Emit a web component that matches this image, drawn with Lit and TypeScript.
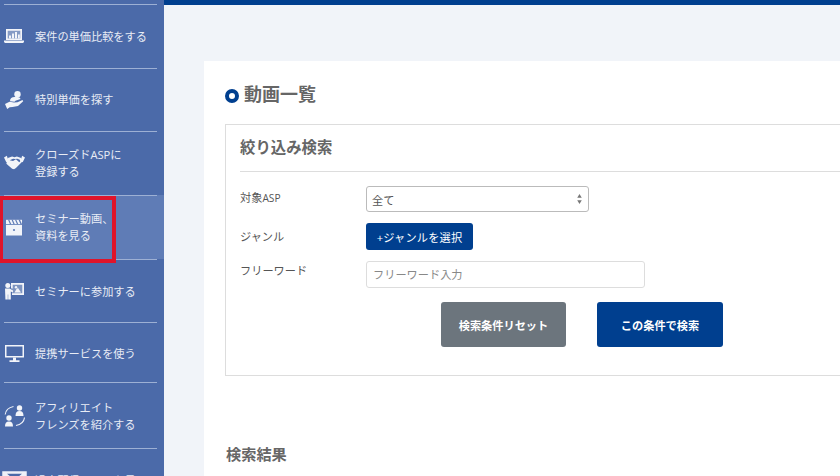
import { LitElement, html, css, svg } from "lit";
import { customElement } from "lit/decorators.js";

const icons: Record<string, unknown> = {
  laptop: svg`<path d="M2 0h16v11H2z" fill-opacity=".35"/><path fill-rule="evenodd" d="M2 0h16v11H2z M3.700 1.700v7.800h12.600V1.700z"/><path d="M5 9.500V6.500h2v3zM8 9.500V4.500h2v5zM11 9.500V3h2v6.500zM14 9.500V5.500h1.800v4z"/><path d="M0 11.500h20V13l-1 1H1l-1-1z"/>`,
  hand: svg`<circle cx="12.500" cy="3.300" r="3.200"/><path d="M5 10.200C5 7.300 6.800 6 9.500 6h3c1.700 0 2.700.8 3 2l-5 1.800-1 1z"/><path d="M0 13l4.500-2.300 4.500.7 3.500-.2 5-2.200 .7 1.300-5.200 4.700-5.500 1-2.800.3-2.500 1.700z"/>`,
  shake: svg`<path d="M0 2.500L3 .8l1.800 5.400-2.400 1.500zM22 2.500L19 .8l-1.800 5.400 2.400 1.500z"/><path d="M4 3.200L8.500 1.500l2.500.8 2.500-.8 4.500 1.700 1 4-6.500 6.300-2 1.500-2-.5-6-5.300z"/><path d="M6 5.600l3.500-1.800 2 .5 2.500-.5 2.500 1.200.5 1.500-1 1-3.500-3-3 1.800z" fill="#4b6aa9"/>`,
  clap: svg`<path d="M0 6h16v10.500H0z"/><path d="M0 .800h16v4.400H0z"/><path d="M2 .800l2 4.400h1.300l-2-4.400zM5.500 .800l2 4.400h1.300l-2-4.400zM9 .800l2 4.400h1.300l-2-4.400zM12.500 .800l2 4.400H16l-2-4.400z" fill="#5f7cb6"/><circle cx="8" cy="11" r="1.100" fill="#5f7cb6"/>`,
  present: svg`<circle cx="2.800" cy="2.600" r="2.500"/><path d="M0 5.600h4.800l3.200 2v1.800L5.800 8.500V16.500H3.200v-5h-.4v5H.4z"/><path d="M7 1h11v10H7z" fill-opacity=".3"/><path fill-rule="evenodd" d="M6 0h13v12H7v-1.700h10.300V1.700H7.700V5.500H6z"/><path d="M9.500 9.500l2-3.500 1.500-1 3 4.500z"/><circle cx="11" cy="4.300" r="1.200"/>`,
  monitor: svg`<path fill-rule="evenodd" d="M0 0h19v12.500H0z M1.500 1.500v9.500h16V1.500z"/><path d="M8 12.500h3v2.800h3.500V17h-10v-1.700H8z"/>`,
  friends: svg`<circle cx="15.500" cy="3" r="2.700"/><path d="M11.500 11c0-3.500 1.200-5 4-5s4 1.500 4 5z"/><circle cx="5" cy="13" r="2.700"/><path d="M1 21.500c0-3.500 1.200-5 4-5s4 1.500 4 5z"/><path d="M1.200 9.500C1.700 5 4.500 2.500 9.500 1.500" fill="none" stroke="#eef1f8" stroke-width="1.100"/><path d="M20.500 12.500c-.5 4-3.500 7-8.500 8" fill="none" stroke="#eef1f8" stroke-width="1.100"/>`,
  mail: svg`<path d="M1.500 1.500h22v16h-22z M1.500 1.500l11 9 11-9" fill="none" stroke="#eef1f8" stroke-width="2.500"/>`,
};

const nav = [
  { h: 64, pt: 0, icon: "laptop", vb: "0 0 20 14", iw: 20, lines: ["案件の単価比較をする"] },
  { h: 63, pt: 0, icon: "hand", vb: "0 0 19 18", iw: 19, lines: ["特別単価を探す"] },
  { h: 64, pt: 0, icon: "shake", vb: "0 0 22 16", iw: 21, lines: ["クローズドASPに", "登録する"] },
  { h: 64, pt: 0, icon: "clap", vb: "0 0 16 17", iw: 16, lines: ["セミナー動画、", "資料を見る"], active: true },
  { h: 63, pt: 1, icon: "present", vb: "0 0 19 17", iw: 19, lines: ["セミナーに参加する"] },
  { h: 60, pt: 2, icon: "monitor", vb: "0 0 19 17", iw: 19, lines: ["提携サービスを使う"] },
  { h: 66, pt: 1, icon: "friends", vb: "0 0 21 22", iw: 21, lines: ["アフィリエイト", "フレンズを紹介する"] },
  { h: 64, pt: 0, icon: "mail", vb: "0 0 25 19", iw: 25, lines: ["過去配信メールを見る"] },
];

@customElement("app-root")
export class AppRoot extends LitElement {
  static styles = css`
    :host {
      display: flex;
      width: 840px;
      height: 476px;
      overflow: hidden;
      position: relative;
      font-family: "Open Sans", "Noto Sans CJK JP", sans-serif;
      font-size: 11.2px;
      color: #555;
      background: #f1f4f9;
    }
    .side {
      width: 164px;
      flex: none;
      background: #4b6aa9;
      padding-top: 4px;
      box-sizing: border-box;
      overflow: hidden;
    }
    .item {
      box-sizing: border-box;
      position: relative;
      display: flex;
      align-items: center;
      color: #e8ecf5;
      line-height: 17px;
    }
    .item::before {
      content: "";
      position: absolute;
      left: 4px;
      right: 7px;
      top: 0;
      height: 1px;
      background: #9db0d4;
    }
    .item.active { background: #5f7cb6; }
    .ic {
      width: 35px;
      flex: none;
      display: flex;
      justify-content: center;
      padding-right: 7px;
      box-sizing: border-box;
    }
    .ic svg { display: block; fill: #f2f4f9; flex: none; }
    .label { display: block; white-space: nowrap; }
    .red {
      position: absolute;
      left: -1px;
      top: 196px;
      width: 109px;
      height: 59px;
      border: 4px solid #e0142a;
    }
    .main { flex: 1; min-width: 0; display: flex; flex-direction: column; }
    .top { height: 5px; flex: none; background: #003f8f; }
    .card {
      flex: 1;
      margin: 56px 0 0 40px;
      background: #fff;
      padding: 21px 0 0 21px;
      display: flex;
      flex-direction: column;
    }
    h1 {
      margin: 0;
      display: flex;
      align-items: center;
      gap: 5px;
      font-size: 18px;
      line-height: 24px;
      font-weight: 700;
      color: #666;
      height: 24px;
    }
    .dot {
      width: 14px;
      height: 14px;
      border: 4px solid #003f8f;
      border-radius: 50%;
      box-sizing: border-box;
      margin-top: 3px;
    }
    .box {
      margin-top: 18px;
      width: 720px;
      height: 252px;
      border: 1px solid #ddd;
      box-sizing: border-box;
      padding: 0 0 0 14px;
    }
    h2 {
      margin: 0;
      font-size: 15.4px;
      font-weight: 700;
      line-height: 22px;
      padding: 12px 0 12px;
      border-bottom: 1px solid #ddd;
      color: #666;
    }
    .row { display: flex; align-items: flex-start; }
    .lab { width: 126px; flex: none; line-height: 17px; }
    .asp { font-size: 10.2px; }
    .r1 { margin-top: 14px; height: 26px; }
    .r1 .lab { padding-top: 3px; }
    .r2 { margin-top: 11px; height: 27px; }
    .r2 .lab { padding-top: 5px; }
    .r3 { margin-top: 11px; height: 27px; }
    .r3 .lab { padding-top: 1px; }
    .select {
      width: 223px;
      height: 26px;
      border: 1px solid #bbb;
      border-radius: 3px;
      box-sizing: border-box;
      display: flex;
      align-items: center;
      justify-content: space-between;
      padding: 2px 6px 0 5px;
      color: #555;
    }
    .arrows { display: block; fill: #777; margin-top: -2px; }
    .genre {
      width: 107px;
      height: 27px;
      background: #003f8f;
      color: #fff;
      border: 0;
      border-radius: 3px;
      font: inherit;
      letter-spacing: .2px;
      padding: 0;
      text-align: center;
    }
    .input {
      width: 279px;
      height: 27px;
      border: 1px solid #ddd;
      border-radius: 3px;
      box-sizing: border-box;
      color: #888;
      line-height: 25px;
      padding-left: 6px;
    }
    .btns { display: flex; gap: 31px; margin: 14px 0 0 201px; }
    .btn {
      width: 126px;
      height: 45px;
      border: 0;
      border-radius: 3px;
      color: #fff;
      font: inherit;
      font-weight: 700;
      padding: 0;
    }
    .gray { background: #6c757d; width: 125px; }
    .blue { background: #003f8f; }
    .result {
      margin: 67px 0 0 1px;
      font-size: 15.2px;
      font-weight: 700;
      line-height: 22px;
      color: #666;
    }
  `;

  render() {
    return html`
      <nav class="side">
        ${nav.map(
          (n) => html`<div class="item ${n.active ? "active" : ""}" style="height:${n.h}px;padding-top:${n.pt}px">
            <span class="ic"><svg viewBox=${n.vb} width=${n.iw}>${icons[n.icon]}</svg></span>
            <span>${n.lines.map((l) => html`<span class="label">${l}</span>`)}</span>
          </div>`
        )}
      </nav>
      <div class="red"></div>
      <main class="main">
        <div class="top"></div>
        <section class="card">
          <h1><span class="dot"></span>動画一覧</h1>
          <div class="box">
            <h2>絞り込み検索</h2>
            <div class="row r1">
              <div class="lab">対象<span class="asp">ASP</span></div>
              <div class="select">全て
                <svg class="arrows" width="5" height="10" viewBox="0 0 5 11"><path d="M2.500 0L5 4H0zM2.500 11L0 7h5z"/></svg>
              </div>
            </div>
            <div class="row r2">
              <div class="lab">ジャンル</div>
              <button class="genre">+ジャンルを選択</button>
            </div>
            <div class="row r3">
              <div class="lab">フリーワード</div>
              <div class="input">フリーワード入力</div>
            </div>
            <div class="btns">
              <button class="btn gray">検索条件リセット</button>
              <button class="btn blue">この条件で検索</button>
            </div>
          </div>
          <div class="result">検索結果</div>
        </section>
      </main>
    `;
  }
}
